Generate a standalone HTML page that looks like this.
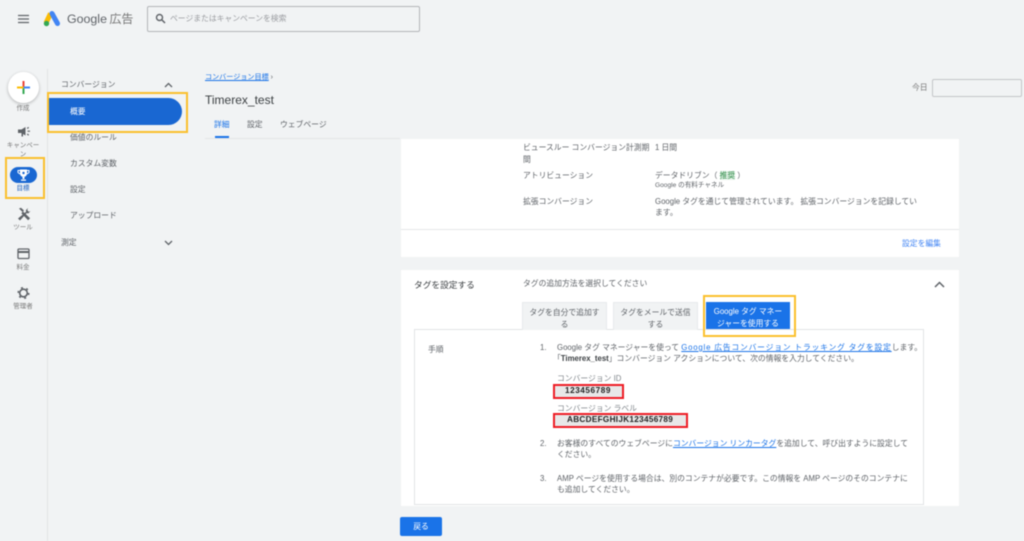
<!DOCTYPE html>
<html lang="ja"><head><meta charset="utf-8"><style>
html,body{margin:0;padding:0}
body{width:1024px;height:541px;position:relative;overflow:hidden;background:#f1f3f4;font-family:"Liberation Sans","Noto Sans CJK JP",sans-serif;color:#5f6368}
#w{position:absolute;left:0;top:0;width:1024px;height:541px;filter:blur(.4px)}
.t{position:absolute;white-space:nowrap;font-size:7.8px;line-height:12px}
.b{position:absolute;box-sizing:border-box}
a{color:#1a73e8;text-decoration:underline}
svg{position:absolute}
.c{text-align:center;transform:translateX(-50%);font-size:6.5px;line-height:9px;color:#777}
.m{font-weight:bold;color:#222;font-size:8.2px}
</style></head><body><div id="w">
<svg style="left:17px;top:14px" width="13" height="10"><path d="M1 1.500h11M1 5h11M1 8.500h11" stroke="#5f6368" stroke-width="1.300"/></svg>
<svg style="left:43px;top:10px" width="18" height="17" viewBox="0 0 18 17"><path d="M7.500 3.500L3 13" stroke="#fbbc04" stroke-width="5"/><path d="M9 3.500L14.500 13.500" stroke="#4285f4" stroke-width="5" stroke-linecap="round"/><circle cx="3.500" cy="13.500" r="2.700" fill="#34a853"/></svg>
<div class="t" style="left:67px;top:10px;font-size:12.400px;line-height:18px;color:#5f6368">Google <span style="color:#777;font-size:12px;margin-left:-1px">広告</span></div>
<div class="b" style="left:147px;top:6px;width:273px;height:26px;border:1px solid #b4b6b9;border-radius:2px"></div>
<svg style="left:155px;top:13px" width="11" height="11" viewBox="0 0 11 11"><circle cx="4.500" cy="4.500" r="3" fill="none" stroke="#5f6368" stroke-width="1.400"/><path d="M7 7l3 3" stroke="#5f6368" stroke-width="1.500"/></svg>
<div class="t" style="left:170px;top:13px;color:#9a9ca0">ページまたはキャンペーンを検索</div>

<div class="b" style="left:47px;top:69px;width:1px;height:472px;background:#e2e4e6"></div>
<div class="b" style="left:8px;top:72px;width:31px;height:31px;border-radius:50%;background:#fff;box-shadow:0 1px 3px #0004"></div>
<svg style="left:16px;top:80px" width="15" height="15"><path d="M7.500 1v6.500" stroke="#ea4335" stroke-width="2"/><path d="M7.500 7.500V14" stroke="#34a853" stroke-width="2"/><path d="M1 7.500h6.500" stroke="#fbbc04" stroke-width="2"/><path d="M7.500 7.500H14" stroke="#4285f4" stroke-width="2"/></svg>
<div class="t c" style="left:23px;top:104px">作成</div>
<svg style="left:17px;top:125px" width="14" height="13" viewBox="0 0 14 13"><path d="M1 4.500h3.500L8.500 2v8.500L6 9v2.500H4.500V8H1z" fill="#5f6368"/><path d="M10.200 3.500l1.500-1.200M10.500 6.200h2.500M10.200 9l1.500 1.200" stroke="#5f6368" stroke-width="1.200"/></svg>
<div class="t c" style="left:23px;top:141px">キャンペー<br>ン</div>
<div class="b" style="left:5px;top:157px;width:40px;height:42px;border:2px solid #fbc02d"></div>
<div class="b" style="left:10px;top:167px;width:27px;height:16px;border-radius:8px;background:#1967d2"></div>
<svg style="left:17px;top:168px" width="13" height="14" viewBox="0 0 13 14"><path d="M3 1.500h7v4a3.500 3.500 0 0 1-7 0zM5.500 9h2v2h-2zM4 11.500h5v1.300H4z" fill="#fff"/><path d="M3 2.500H1v2l2 1.500M10 2.500h2v2l-2 1.500" fill="none" stroke="#fff"/><circle cx="6.500" cy="5" r="1.200" fill="#1967d2"/></svg>
<div class="t c" style="left:23px;top:184px;color:#1a5fc0">目標</div>
<svg style="left:17px;top:207px" width="14" height="14" viewBox="0 0 14 14"><path d="M2 1.500l3.500 3.500-1.200 1.200 6.800 7 2-2L6 4.500 7 3.500 4 .8zM11 1L8.800 3.200l.4 1.400L1 11.500 3 13.500 9.800 6l1.400.5L13.500 4 11.800 4.700 10.300 3.200z" fill="#5f6368"/></svg>
<div class="t c" style="left:23px;top:223px">ツール</div>
<svg style="left:17px;top:248px" width="13" height="12" viewBox="0 0 13 12"><rect x="1" y="1" width="11" height="9.500" rx="1" fill="none" stroke="#5f6368" stroke-width="1.300"/><rect x="1" y="3" width="11" height="2" fill="#5f6368"/></svg>
<div class="t c" style="left:23px;top:263px">料金</div>
<svg style="left:17px;top:286px" width="13" height="14" viewBox="0 0 13 14"><circle cx="6.500" cy="7" r="3.800" fill="none" stroke="#5f6368" stroke-width="1.600"/><circle cx="6.500" cy="7" r="5.300" fill="none" stroke="#5f6368" stroke-width="1.500" stroke-dasharray="2 3.550"/></svg>
<div class="t c" style="left:23px;top:302px">管理者</div>

<div class="t" style="left:61px;top:79px">コンバージョン</div>
<svg style="left:164px;top:82px" width="9" height="6"><path d="M1 5l3.500-3.500L8 5" fill="none" stroke="#5f6368" stroke-width="1.300"/></svg>
<div class="b" style="left:48px;top:98px;width:134px;height:27px;background:#1967d2;border-radius:0 14px 14px 0"></div>
<div class="b" style="left:47px;top:92px;width:141px;height:41px;border:2px solid #fbc02d"></div>
<div class="t" style="left:70px;top:106px;color:#fff">概要</div>
<div class="t" style="left:70px;top:132px">価値のルール</div>
<div class="t" style="left:70px;top:158px">カスタム変数</div>
<div class="t" style="left:70px;top:184px">設定</div>
<div class="t" style="left:70px;top:210px">アップロード</div>
<div class="t" style="left:61px;top:237px">測定</div>
<svg style="left:164px;top:240px" width="9" height="6"><path d="M1 1l3.500 3.500L8 1" fill="none" stroke="#5f6368" stroke-width="1.300"/></svg>

<div class="t" style="left:205px;top:71px;font-size:7.100px"><a>コンバージョン目標</a> ›</div>
<div class="t" style="left:205px;top:93px;font-size:12px;line-height:15px;color:#3c4043">Timerex_test</div>
<div class="t" style="left:214px;top:119px;color:#1a73e8">詳細</div>
<div class="t" style="left:247px;top:119px">設定</div>
<div class="t" style="left:280px;top:119px">ウェブページ</div>
<div class="b" style="left:215px;top:136px;width:14px;height:2px;background:#1a73e8"></div>
<div class="b" style="left:205px;top:138px;width:195px;height:1px;background:#e4e6e8"></div>
<div class="t" style="left:912px;top:82px;color:#777">今日</div>
<div class="b" style="left:932px;top:79px;width:90px;height:18px;border:1px solid #c4c6c8;border-radius:2px"></div>

<div class="b" style="left:401px;top:139px;width:558px;height:118px;background:#fff"></div>
<div class="b" style="left:401px;top:229px;width:558px;height:1px;background:#e6e7e9"></div>
<div class="t" style="left:523px;top:142px">ビュースルー コンバージョン計測期</div>
<div class="t" style="left:523px;top:154px">間</div>
<div class="t" style="left:655px;top:142px">1 日間</div>
<div class="t" style="left:523px;top:170px">アトリビューション</div>
<div class="t" style="left:655px;top:170px">データドリブン（ <span style="background:#e6f4ea;color:#2e8b47">推奨</span> ）</div>
<div class="t" style="left:655px;top:180px;font-size:6.600px">Google の有料チャネル</div>
<div class="t" style="left:523px;top:196px">拡張コンバージョン</div>
<div class="t" style="left:655px;top:196px">Google タグを通じて管理されています。 拡張コンバージョンを記録してい</div>
<div class="t" style="left:655px;top:207px">ます。</div>
<div class="t" style="left:902px;top:238px;color:#4285f4">設定を編集</div>

<div class="b" style="left:401px;top:270px;width:558px;height:236px;background:#fff"></div>
<div class="t" style="left:414px;top:279px;font-size:8.700px;color:#3c4043">タグを設定する</div>
<div class="t" style="left:523px;top:278px">タグの追加方法を選択してください</div>
<svg style="left:934px;top:281px" width="11" height="7"><path d="M1 6l4.500-4.500L10 6" fill="none" stroke="#5f6368" stroke-width="1.500"/></svg>
<div class="b" style="left:414px;top:329px;width:510px;height:176px;background:#fff;border:1px solid #e2e4e6"></div>
<div class="b" style="left:522px;top:302px;width:85px;height:28px;background:#f1f3f4;border:1px solid #e8eaec;border-bottom:0;text-align:center;font-size:7.800px;line-height:11.500px;padding-top:4px">タグを自分で追加す<br>る</div>
<div class="b" style="left:613px;top:302px;width:85px;height:28px;background:#f1f3f4;border:1px solid #e8eaec;border-bottom:0;text-align:center;font-size:7.800px;line-height:11.500px;padding-top:4px">タグをメールで送信<br>する</div>
<div class="b" style="left:706px;top:302px;width:84px;height:27px;background:#1a73e8;color:#fff;text-align:center;font-size:7.800px;line-height:11.500px;padding-top:4px">Google タグ マネー<br>ジャーを使用する</div>
<div class="b" style="left:703px;top:295px;width:93px;height:42px;border:2px solid #fbc02d"></div>
<div class="t" style="left:428px;top:344px">手順</div>
<div class="t" style="left:540px;top:342px">1.</div>
<div class="t" style="left:557px;top:342px">Google タグ マネージャーを使って <a style="letter-spacing:.8px">Google 広告コンバージョン トラッキング タグを設定</a>します。</div>
<div class="t" style="left:553px;top:353px">「<b style="color:#3c4043">Timerex_test</b>」コンバージョン アクションについて、次の情報を入力してください。</div>
<div class="t" style="left:557px;top:373px;color:#80868b">コンバージョン ID</div>
<div class="b" style="left:553px;top:384px;width:71px;height:15px;background:#e8e8e8;border:2px solid #ee1c25"></div>
<div class="t m" style="left:565px;top:385px;letter-spacing:.55px">123456789</div>
<div class="t" style="left:557px;top:403px;color:#80868b">コンバージョン ラベル</div>
<div class="b" style="left:553px;top:413px;width:135px;height:15px;background:#e8e8e8;border:2px solid #ee1c25"></div>
<div class="t m" style="left:567px;top:414px;letter-spacing:.3px">ABCDEFGHIJK123456789</div>
<div class="t" style="left:540px;top:438px">2.</div>
<div class="t" style="left:557px;top:438px">お客様のすべてのウェブページに<a>コンバージョン リンカータグ</a>を追加して、呼び出すように設定して</div>
<div class="t" style="left:557px;top:449px">ください。</div>
<div class="t" style="left:540px;top:473px">3.</div>
<div class="t" style="left:557px;top:473px">AMP ページを使用する場合は、別のコンテナが必要です。この情報を AMP ページのそのコンテナに</div>
<div class="t" style="left:557px;top:484px">も追加してください。</div>
<div class="b" style="left:400px;top:517px;width:42px;height:19px;background:#1a73e8;border-radius:2px;color:#fff;text-align:center;font-size:7.800px;line-height:19px">戻る</div>
</div></body></html>
